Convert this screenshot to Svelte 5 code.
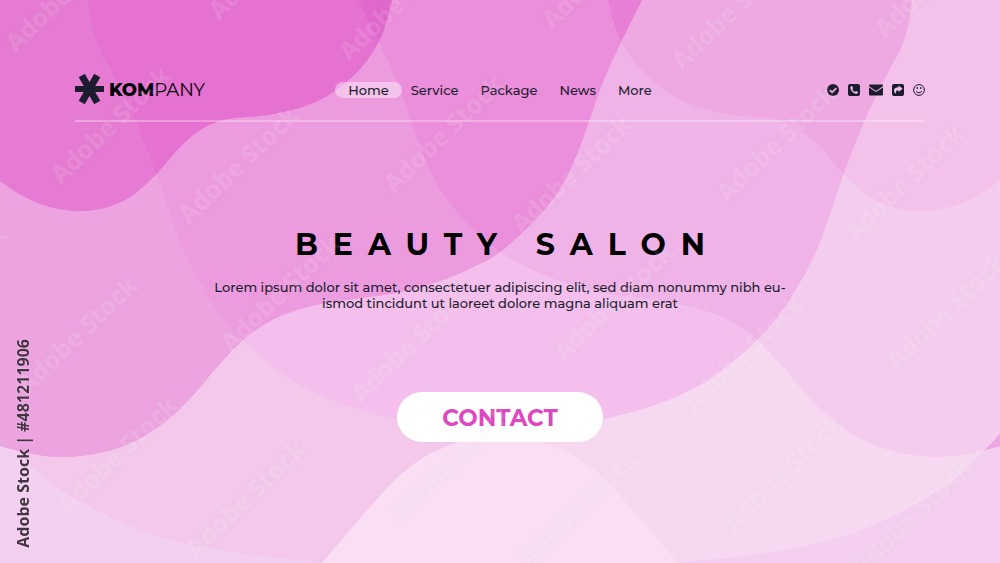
<script lang="ts">
    type Point = [number, number];

    const links = ['Home', 'Service', 'Package', 'News', 'More'];

    // wave edges, from the smallest one in the top left corner outwards
    const edges: Point[][] = [
        [[394, -30], [392, 0], [380, 39], [359, 70], [333, 92], [305, 106], [267, 115], [227, 119], [200, 130], [178, 149], [157, 173], [133, 195], [108, 207], [80, 211], [50, 207], [25, 197], [0, 181], [-25, 160]],
        [[656, -30], [642, 0], [623, 38], [604, 79], [590, 118], [577, 154], [561, 187], [538, 217], [500, 252], [473, 267], [443, 280], [400, 292], [360, 298], [320, 304], [288, 313], [263, 325], [242, 341], [217, 367], [195, 393], [172, 416], [143, 437], [108, 451], [67, 457], [33, 454], [0, 446], [-30, 434]],
        [[914, -30], [912, 0], [904, 40], [884, 80], [864, 122], [844, 173], [828, 220], [815, 254], [799, 284], [780, 314], [757, 340], [730, 364], [700, 385], [655, 405], [603, 419], [560, 425], [520, 430], [480, 436], [450, 445], [424, 457], [400, 475], [377, 499], [350, 530], [320, 565], [295, 595]],
        [[1030, 395], [1000, 433], [983, 451], [961, 473], [934, 493], [900, 512], [860, 530], [817, 543], [780, 550], [740, 556], [680, 562], [600, 572], [500, 590]]
    ];

    // colour of each overlap: left wave by row, right wave by column, last one is outside
    const colors = [
        ['#de60c8', '#e067cb', '#e572d1', '#e57bd2', '#e57bd2'],
        ['#e77fd6', '#eb8edb', '#ed9bdf', '#eca3e0', '#eca6e0'],
        ['#eea9e2', '#f0b3e8', '#f4bfec', '#f3c8eb', '#f4d0f0'],
        ['#f4c1ea', '#f4cdee', '#f6d9f1', '#f9def4', '#f9def4'],
        ['#f4c1ea', '#eda8e2', '#f4cfef', '#f4cfef', '#f4cfef']
    ];

    function wave(points: Point[], flip: boolean) {
        const p = points.map(([x, y]) => [flip ? 1000 - x : x, y]);
        const first = p[0];
        const last = p[p.length - 1];
        const side = flip ? 1100 : -100;
        const far = flip ? -100 : 1100;
        let d = `M${first}`;
        for (let i = 0; i < p.length - 1; i++) {
            const a = p[Math.max(i - 1, 0)];
            const b = p[i];
            const c = p[i + 1];
            const e = p[Math.min(i + 2, p.length - 1)];
            d += `C${b[0] + (c[0] - a[0]) / 6} ${b[1] + (c[1] - a[1]) / 6} ${c[0] - (e[0] - b[0]) / 6} ${c[1] - (e[1] - b[1]) / 6} ${c}`;
        }
        // waves that run off the bottom close around the corner below
        d += last[1] > 563 ? `L${last[0]} 700L${side} 700` : `L${side} ${last[1]}`;
        d += `L${side} -60`;
        // and the widest one starts at the side, so it takes in the far top corner
        d += first[1] > 0 ? `L${far} -60L${far} ${first[1]}Z` : `L${first[0]} -60Z`;
        return d;
    }

    const left = edges.map((e) => wave(e, false));
    const right = edges.map((e) => wave(e, true));

    const starts: Point[] = [[16, 53], [219, 21], [61, 185], [189, 225], [231, 353], [28, 395], [68, 515], [196, 559]];
    const marks = starts.flatMap(([x, y]) => [-1, 0, 1, 2].map((i) => [x + i * 333, y + i * 9]));
</script>

<div class="page">
    <svg class="backdrop" viewBox="0 0 1000 563" preserveAspectRatio="xMidYMid slice" aria-hidden="true">
        <defs>
            {#each left as d, i}
                <clipPath id="left{i}"><path {d} /></clipPath>
            {/each}
        </defs>
        {#each [4, 3, 2, 1, 0] as row}
            <g clip-path={row < 4 ? `url(#left${row})` : undefined}>
                <rect x="-100" y="-60" width="1200" height="760" fill={colors[row][4]} />
                {#each [3, 2, 1, 0] as col}
                    <path d={right[col]} fill={colors[row][col]} />
                {/each}
            </g>
        {/each}
    </svg>

    <header>
        <a class="logo" href="/">
            <svg width="30" height="30" viewBox="0 0 30 30" fill="#1b1c2e" aria-hidden="true">
                <rect x="0" y="12" width="29" height="6" />
                <rect x="-1" y="11.500" width="31" height="7" transform="rotate(60 14.500 15)" />
                <rect x="-1" y="11.500" width="31" height="7" transform="rotate(-60 14.500 15)" />
            </svg>
            <span><b>KOM</b>PANY</span>
        </a>
        <nav>
            {#each links as link, i}
                <a class:active={i === 0} href="#{link.toLowerCase()}">{link}</a>
            {/each}
        </nav>
        <div class="icons">
            <a href="#verified" aria-label="Verified">
                <svg width="12" height="12" viewBox="0 0 12 12">
                    <circle cx="6" cy="6" r="6" fill="#1b1c2e" />
                    <path d="M2.8 6.1 5.2 8.4 9.3 4.2" fill="none" stroke="#f0b0e5" stroke-width="1.7" />
                </svg>
            </a>
            <a href="#phone" aria-label="Phone">
                <svg width="12" height="12" viewBox="0 0 12 12">
                    <rect width="12" height="12" rx="2" fill="#1b1c2e" />
                    <path d="M3.6 2 2.3 2.9C2 5.8 5.4 10 9 9.8L10 8.5 9.8 7.8 7.8 7 6.9 7.9C5.8 7.4 4.9 6.4 4.4 5.2L5.1 4.4 4.4 2.2Z" fill="#f0b0e5" />
                </svg>
            </a>
            <a href="#mail" aria-label="Mail">
                <svg width="14" height="12" viewBox="0 0 14 12">
                    <path d="M0 1.500Q0 .5 1 .5H13Q14 .5 14 1.500V2L8.200 6.200Q7 7 5.800 6.200L0 2ZM0 3.300 5.200 7.100Q7 8.300 8.800 7.100L14 3.300V10.500Q14 11.500 13 11.500H1Q0 11.500 0 10.500Z" fill="#1b1c2e" />
                </svg>
            </a>
            <a href="#share" aria-label="Share">
                <svg width="12" height="12" viewBox="0 0 12 12">
                    <rect width="12" height="12" rx="2" fill="#1b1c2e" />
                    <path d="M6.500 1.500 10.700 4.700 6.500 7.900V6.200C4.300 6.100 3.400 7.300 4.200 10 .6 7.500 1.300 3.400 6.500 3.300Z" fill="#f4c1ea" />
                </svg>
            </a>
            <a href="#smile" aria-label="Smile">
                <svg width="12" height="12" viewBox="0 0 12 12" fill="none" stroke="#1b1c2e">
                    <circle cx="6" cy="6" r="5.400" />
                    <path d="M3.200 7Q3.800 8.800 6 8.800T8.800 7" />
                    <ellipse cx="4.200" cy="4" rx=".8" ry="1" fill="#1b1c2e" stroke="none" />
                    <ellipse cx="7.800" cy="4" rx=".8" ry="1" fill="#1b1c2e" stroke="none" />
                </svg>
            </a>
        </div>
    </header>

    <main>
        <h1>BEAUTY SALON</h1>
        <p>
            Lorem ipsum dolor sit amet, consectetuer adipiscing elit, sed diam nonummy nibh eu-<br />
            ismod tincidunt ut laoreet dolore magna aliquam erat
        </p>
        <button type="button">CONTACT</button>
    </main>

    <svg class="marks" viewBox="0 0 1000 563" preserveAspectRatio="xMidYMid slice" aria-hidden="true">
        {#each marks as [x, y]}
            <text transform="translate({x} {y}) rotate(-44)">Adobe Stock</text>
        {/each}
    </svg>
    <div class="credit">Adobe Stock | #481211906</div>
</div>

<style>
    :global(body) {
        margin: 0;
    }

    .page {
        position: relative;
        min-height: 100vh;
        overflow: hidden;
        box-sizing: border-box;
        padding: 74px 7.5% 0;
        font-family: Montserrat, Inter, sans-serif;
        font-weight: 500;
        color: #1b1c2e;
    }

    .backdrop, .marks {
        position: absolute;
        top: 0;
        left: 0;
        width: 100%;
        height: 100%;
    }

    .marks {
        pointer-events: none;
    }

    .marks text {
        font-family: 'Noto Sans', sans-serif;
        font-size: 25px;
        font-weight: 700;
        fill: rgba(255, 255, 255, 0.12);
        filter: drop-shadow(0 0 3px rgba(120, 60, 110, 0.2));
    }

    header {
        position: relative;
        display: grid;
        grid-template-columns: 1fr auto 1fr;
        align-items: center;
        padding-bottom: 16px;
        border-bottom: 2px solid rgba(255, 255, 255, 0.3);
    }

    a {
        color: inherit;
        text-decoration: none;
    }

    .logo {
        display: flex;
        align-items: center;
        gap: 4px;
        font-size: 18px;
        font-weight: 400;
        color: #000;
    }

    .logo span {
        padding-top: 2px;
    }

    .logo b {
        font-weight: 800;
    }

    nav {
        display: flex;
        gap: 22px;
        padding-top: 2px;
        font-size: 13px;
        line-height: 16px;
    }

    .active {
        padding: 0 13px;
        margin: 0 -13px;
        border-radius: 8px;
        background: rgba(255, 255, 255, 0.4);
    }

    .icons {
        display: flex;
        justify-content: flex-end;
        gap: 9px;
        padding-top: 2px;
    }

    .icons svg {
        display: block;
    }

    main {
        position: relative;
        display: flex;
        flex-direction: column;
        align-items: center;
        padding-top: 103px;
        text-align: center;
    }

    h1 {
        margin: 0;
        padding-left: 15px;
        font-size: 30px;
        line-height: 40px;
        font-weight: 700;
        letter-spacing: 15px;
        color: #000;
    }

    p {
        margin: 14px 0 81px;
        font-size: 13px;
        line-height: 16px;
    }

    button {
        padding: 2px 45px 0;
        height: 50px;
        border: none;
        border-radius: 25px;
        background: #fff;
        color: #dd47bf;
        font-family: inherit;
        font-size: 23px;
        font-weight: 700;
    }

    .credit {
        position: absolute;
        left: 12px;
        bottom: 15px;
        writing-mode: vertical-rl;
        transform: rotate(180deg);
        font-family: 'Noto Sans', sans-serif;
        font-size: 16px;
        line-height: 22px;
        font-weight: 700;
        color: #463343;
        text-shadow: 0 0 2px rgba(255, 255, 255, 0.5);
    }
</style>
